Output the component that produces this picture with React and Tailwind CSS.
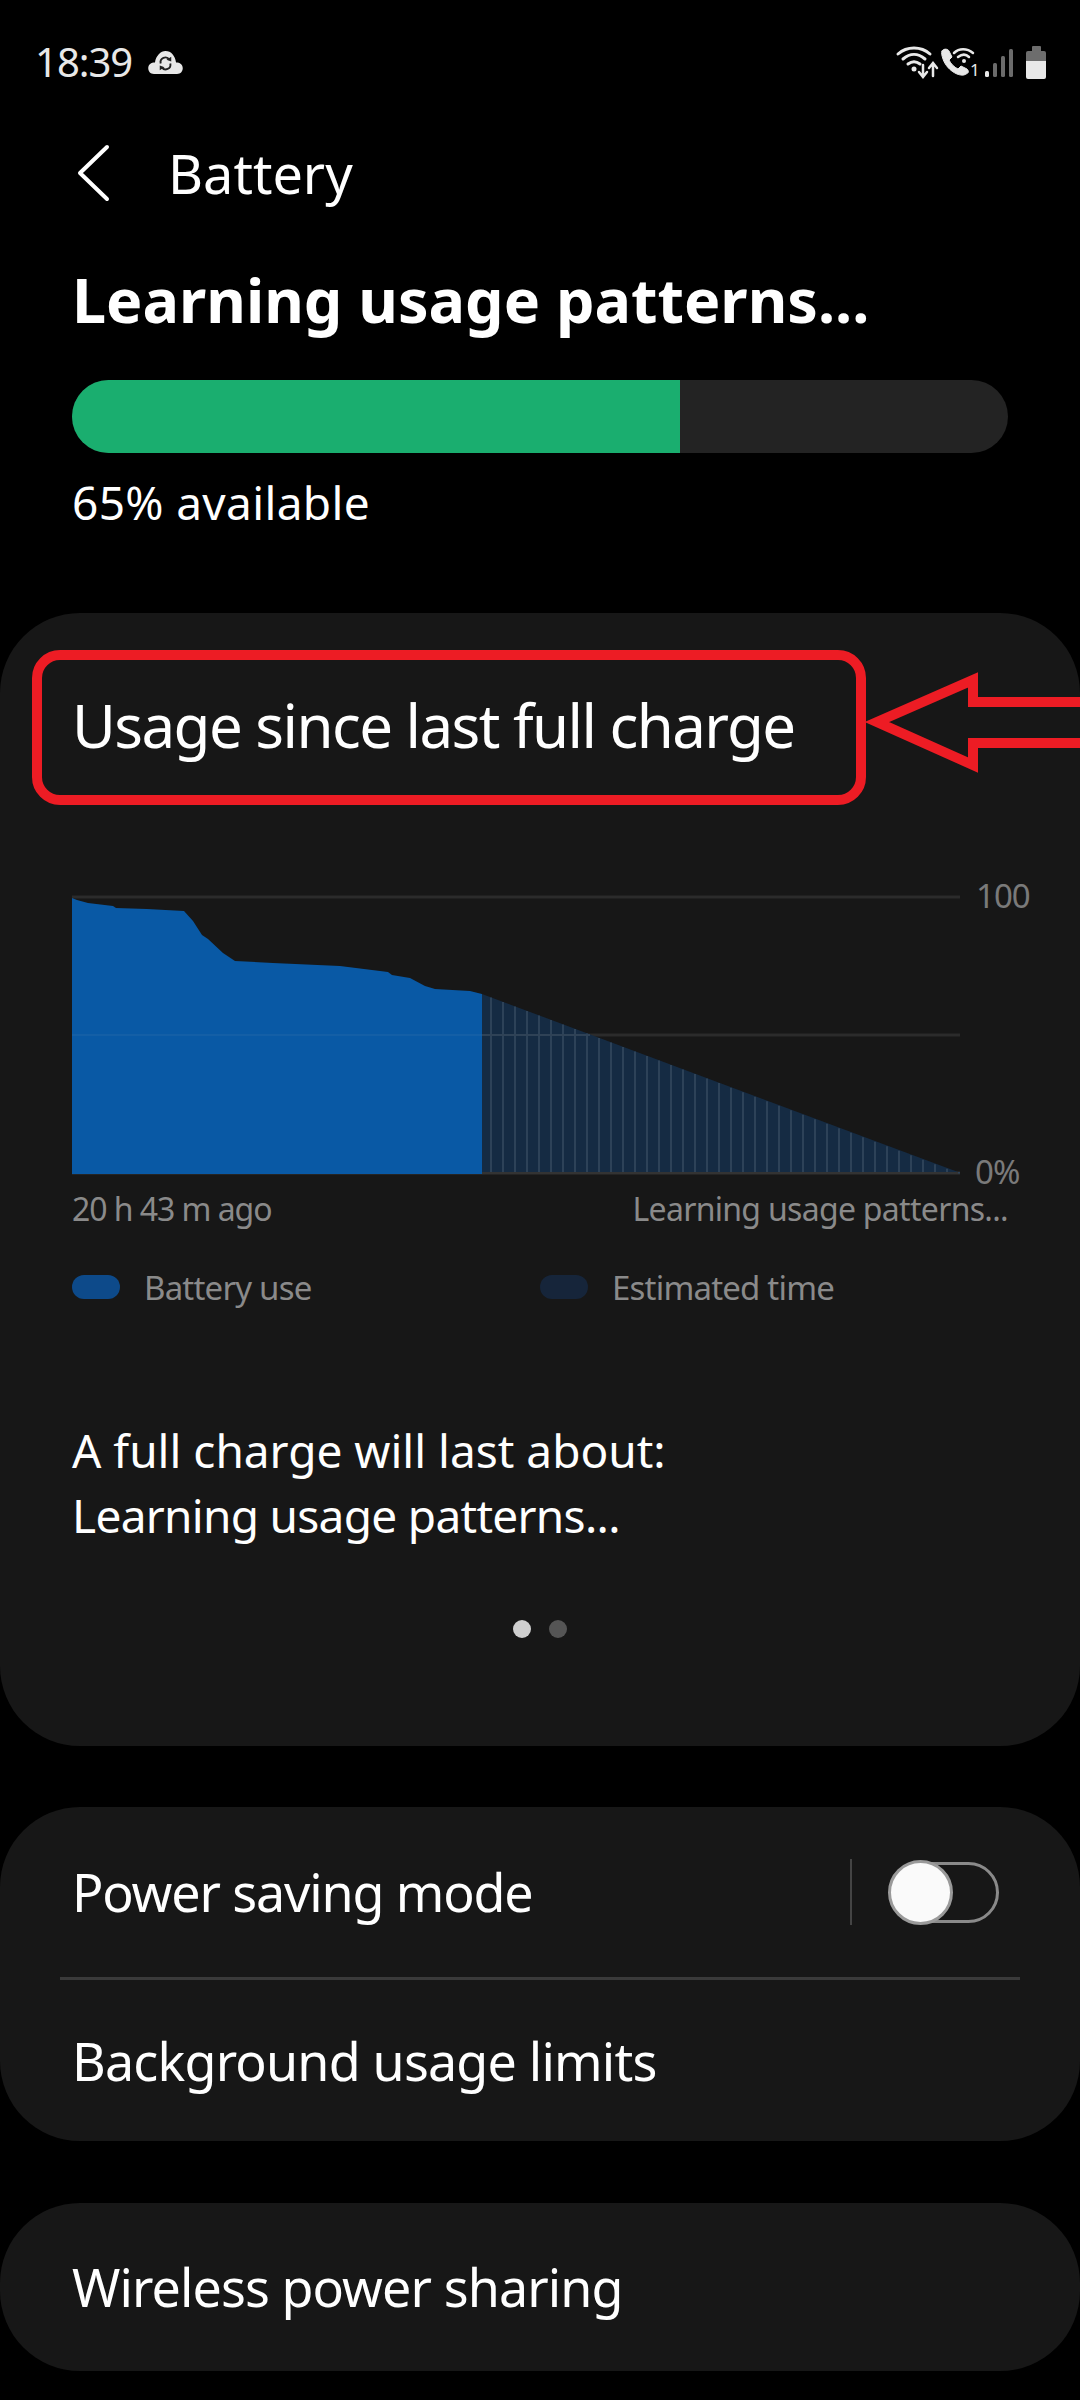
import React from 'react';

const actual = "72,1173 72,897 77,899 88,902 113,905 116,907 147,908 184,910 193,920 202,934 208,938 223,952 235,960 273,962 340,965 388,971 392,974 410,977 425,985 435,988 470,990 482,993 482,1173";
const stripes = Array.from({ length: 40 }, (_, i) => 491 + i * 12);
const stripeTop = (x) => 993 + ((x - 482) * 179) / 476;

function Chart() {
  return (
    <svg width="1080" height="329" viewBox="0 865 1080 329" className="block">
      <line x1="72" x2="960" y1="896" y2="896" stroke="#2b2b2b" strokeWidth="3" />
      <line x1="72" x2="960" y1="1034" y2="1034" stroke="#2b2b2b" strokeWidth="3" />
      <line x1="72" x2="960" y1="1172" y2="1172" stroke="#333" strokeWidth="3" />
      <polygon points="482,993 958,1171 482,1171" fill="#152b43" />
      {stripes.map((x) => (
        <line key={x} x1={x} x2={x} y1={stripeTop(x)} y2="1171" stroke="#2d4258" strokeWidth="2" />
      ))}
      <line x1="482" x2="590" y1="1034" y2="1034" stroke="#2f4256" strokeWidth="2" />
      <polygon points={actual} fill="#0959a5" />
      <line x1="72" x2="482" y1="1034" y2="1034" stroke="#145fa6" strokeWidth="2" />
      <text x="976" y="907" fontSize="33" fill="#7a7a7a" letterSpacing="-1">100</text>
      <text x="975" y="1183" fontSize="33" fill="#7a7a7a" letterSpacing="-1">0%</text>
    </svg>
  );
}

function StatusIcons() {
  return (
    <svg width="120" height="40" viewBox="895 41 120 40" fill="none">
      <g stroke="#e8e8e8" strokeWidth="3" strokeLinecap="round">
        <path d="M899 53 C908 45 922 45 931 53" />
        <path d="M904 58 C911 52 919 52 926 58" />
        <path d="M909 63 C913 60 917 60 921 63" />
        <path d="M924 75 V64 M920 71 L924 76 L928 71" strokeWidth="2.5" />
        <path d="M934 75 V63 M930 67 L934 62 L938 67" strokeWidth="2.5" />
        <path d="M943 50 C945 47 949 48 950 50 L953 56 L950 59 C952 63 955 66 959 68 L962 65 L968 68 C970 70 970 72 967 73 C964 75 961 74 958 73 C951 70 946 64 944 58 C943 55 942 52 943 50 Z" fill="#e8e8e8" strokeWidth="1" />
        <path d="M955 52 C960 47 968 47 974 52" strokeWidth="2.5" />
        <path d="M959 56 C963 53 967 53 970 56" strokeWidth="2.5" />
      </g>
      <circle cx="915" cy="68" r="2.5" fill="#e8e8e8" />
      <circle cx="965" cy="60" r="2" fill="#e8e8e8" />
      <text x="971" y="75" fontSize="17" fill="#e8e8e8">1</text>
      <rect x="986" y="70" width="4" height="6" rx="1.5" fill="#e8e8e8" />
      <rect x="994" y="62" width="4" height="14" rx="1.5" fill="#6b6b6b" />
      <rect x="1002" y="55" width="4" height="21" rx="1.5" fill="#6b6b6b" />
      <rect x="1010" y="48" width="4" height="28" rx="1.5" fill="#6b6b6b" />
    </svg>
  );
}

function BatteryIcon() {
  return (
    <div className="flex flex-col items-center w-[20px]">
      <div className="w-[9px] h-[5px] bg-[#6d6d6d] rounded-t-[1px]" />
      <div className="w-[20px] h-[10px] bg-[#6d6d6d] rounded-t-[2px]" />
      <div className="w-[20px] h-[18px] bg-[#e8e8e8] rounded-b-[2px]" />
    </div>
  );
}

function CloudIcon() {
  return (
    <svg width="35" height="23" viewBox="0 0 36 24">
      <path d="M6 24 C2 24 0 21 0 18 C0 14 3 12 7 12 C8 5 13 0 18 0 C24 0 28 5 29 12 C33 12 36 14 36 18 C36 21 34 24 30 24 Z" fill="#e8e8e8" />
      <g fill="none" stroke="#222" strokeWidth="2">
        <path d="M13 13 A5 5 0 0 1 22 9" />
        <path d="M23 13 A5 5 0 0 1 14 17" />
      </g>
      <path d="M19 9 L24 6 L24 11 Z M17 17 L12 20 L12 15 Z" fill="#222" />
    </svg>
  );
}

function Toggle() {
  return (
    <div className="flex items-center">
      <div className="w-[2px] h-[66px] bg-[#444] mr-[38px]" />
      <div className="relative w-[109px] h-[61px] rounded-full border-[3px] border-[#8a8a8a]">
        <div className="absolute left-[-5px] top-[-5px] w-[65px] h-[65px] rounded-full bg-[#fafafa] border-[3px] border-[#9a9a9a]" />
      </div>
    </div>
  );
}

export default function App() {
  return (
    <div className="w-[1080px] h-[2400px] bg-black text-white overflow-hidden relative font-['Noto_Sans',sans-serif]">
      {/* Status bar */}
      <div className="h-[124px] pl-[35px] pr-[34px] flex items-center justify-between text-[#e8e8e8]">
        <div className="flex items-center gap-[16px]">
          <span className="text-[40px] leading-none tracking-[-1px]">18:39</span>
          <CloudIcon />
        </div>
        <div className="flex items-center gap-[12px]">
          <StatusIcons />
          <BatteryIcon />
        </div>
      </div>

      {/* Header */}
      <div className="h-[98px] flex items-center pl-[76px] gap-[58px]">
        <svg width="34" height="58" viewBox="0 0 34 58" fill="none">
          <path d="M31 3 L4 29 L31 55" stroke="#fff" strokeWidth="4" strokeLinecap="round" strokeLinejoin="round" />
        </svg>
        <span className="text-[54px] leading-none">Battery</span>
      </div>

      {/* Level */}
      <div className="px-[72px] mt-[39px]">
        <h1 className="text-[61px] font-bold leading-[78px]">Learning usage patterns...</h1>
        <div className="mt-[41px] h-[73px] rounded-full bg-[#232323] overflow-hidden">
          <div className="h-full w-[608px] bg-[#1aae6f]" />
        </div>
        <div className="mt-[18px] text-[46px] leading-[62px] tracking-[0.35px]">65% available</div>
      </div>

      {/* Usage card */}
      <div className="mt-[80px] h-[1133px] rounded-[80px] bg-[#171717] pt-[37px]">
        <div className="ml-[32px] w-[834px] h-[155px] border-[10px] border-[#ed1c24] rounded-[28px] flex items-center pl-[30px] pb-[5px]">
          <span className="text-[60px] leading-none tracking-[-1.55px]">Usage since last full charge</span>
        </div>
        <div className="mt-[61px]">
          <Chart />
        </div>
        <div className="px-[72px] h-[28px] flex items-center justify-between text-[32px] leading-none text-[#8a8a8a]">
          <span className="tracking-[-1.05px]">20 h 43 m ago</span>
          <span className="tracking-[-0.7px]">Learning usage patterns...</span>
        </div>
        <div className="mt-[46px] h-[36px] pl-[72px] flex items-center text-[33px] leading-none text-[#8a8a8a] tracking-[-0.8px]">
          <div className="w-[48px] h-[24px] rounded-full bg-[#0d4a8a]" />
          <span className="ml-[24px] w-[396px]">Battery use</span>
          <div className="w-[48px] h-[24px] rounded-full bg-[#16253a]" />
          <span className="ml-[24px]">Estimated time</span>
        </div>
        <div className="mt-[113px] px-[72px] text-[46px] leading-[65px]">
          <div>A full charge will last about:</div>
          <div className="tracking-[-0.7px]">Learning usage patterns...</div>
        </div>
        <div className="mt-[72px] flex justify-center gap-[18px]">
          <div className="w-[18px] h-[18px] rounded-full bg-[#cfcfcf]" />
          <div className="w-[18px] h-[18px] rounded-full bg-[#555]" />
        </div>
      </div>

      {/* Power rows */}
      <div className="mt-[61px] rounded-[80px] bg-[#171717]">
        <div className="h-[170px] pl-[72px] pr-[81px] flex items-center justify-between">
          <span className="text-[52px] leading-none tracking-[-1.15px]">Power saving mode</span>
          <Toggle />
        </div>
        <div className="mx-[60px] h-[3px] bg-[#3a3a3a]" />
        <div className="h-[161px] pl-[72px] flex items-center">
          <span className="text-[52px] leading-none tracking-[-0.8px]">Background usage limits</span>
        </div>
      </div>

      <div className="mt-[62px] h-[168px] rounded-[80px] bg-[#171717] pl-[72px] flex items-center">
        <span className="text-[52px] leading-none tracking-[-0.9px]">Wireless power sharing</span>
      </div>

      {/* Red annotation arrow */}
      <svg className="absolute left-[860px] top-[660px]" width="220" height="125" viewBox="860 660 220 125" fill="none">
        <path d="M1090 702 H973 V680 L877 722 L973 765 V743 H1090" stroke="#ed1c24" strokeWidth="10" />
      </svg>
    </div>
  );
}
